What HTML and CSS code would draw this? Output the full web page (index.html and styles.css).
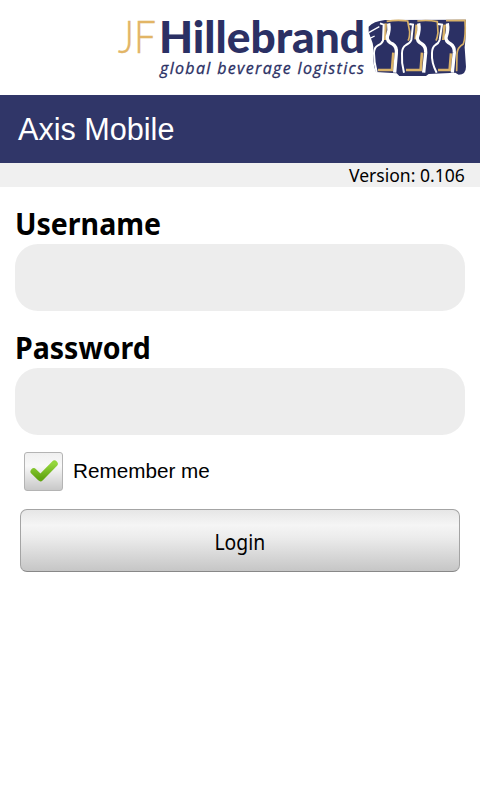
FILE: index.html
```html
<!DOCTYPE html>
<html lang="en">
<head>
    <meta charset="UTF-8">
    <meta name="viewport" content="width=device-width, initial-scale=1.0">
    <title>Axis Mobile</title>
    <link rel="stylesheet" href="styles.css">
</head>
<body>
    <div class="logo">
        <svg width="370" height="85" viewBox="110 5 370 85" role="img" aria-label="JF Hillebrand">
            <text class="logo-jf" x="118" y="53" textLength="38" lengthAdjust="spacingAndGlyphs">JF</text>
            <text class="logo-name" x="159" y="53" textLength="206" lengthAdjust="spacingAndGlyphs">Hillebrand</text>
            <text class="logo-tag" x="160" y="74" textLength="204">global beverage logistics</text>
            <g transform="translate(360 10) scale(.3333)">
                <path class="navy" d="M26 50 Q40 34 75 30 L318 29 Q318 80 314 112 L318 170 Q318 194 296 194 L286 188 L206 192 L198 198 L118 198 L110 190 L48 186 Q36 160 40 110 L38 100 L26 66 Z"/>
                <path class="gold-line" d="M80 34 Q112 29 143 33 L149 65 Q149 84 144 92 M172 33 Q204 29 232 35 L234 68 Q232 84 228 92 M258 32 L315 31 Q318 80 310 102 Q292 112 291 132 L290 184"/>
                <path class="gold-line wide" d="M77 40 L74 90 M100 128 L96 180 L54 180 M170 44 L167 88 M186 128 L182 180 L138 180 M254 44 L250 90 M273 130 L269 180 L234 180"/>
                <path class="white-line" d="M86 40 Q90 60 82 80 Q80 94 98 102 Q111 110 109 130 L104 188"/>
                <path class="white-line thin" d="M60 40 L71 44 L69 92 Q66 101 54 106 Q42 112 42 130 Q42 158 50 186"/>
                <path class="white-line" d="M176 40 Q180 60 172 82 Q170 94 186 102 Q198 110 197 128 L191 188"/>
                <path class="white-line thin" d="M148 42 L159 44 L154 90 Q150 100 138 105 Q126 112 126 130 Q124 158 132 188"/>
                <path class="white-line" d="M262 40 Q266 60 258 82 Q256 94 272 102 Q284 110 283 128 L277 188"/>
                <path class="white-line thin" d="M234 42 L246 44 L239 90 Q236 100 226 105 Q216 112 216 130 Q214 158 230 188"/>
                <path class="white-line slim" d="M26 68 L58 50 M28 86 L44 78"/>
            </g>
        </svg>
    </div>
    <div class="header">
        <h1>Axis Mobile</h1>
    </div>
    <div class="version"><span>Version: 0.106</span></div>
    <form class="login">
        <label for="username"><span>Username</span></label>
        <input type="text" id="username" class="field">
        <label for="password"><span>Password</span></label>
        <input type="password" id="password" class="field">
        <div class="remember">
            <span class="checkbox">
                <svg width="28" height="24" viewBox="0 0 28 24">
                    <defs>
                        <linearGradient id="green" x1="0" y1="0" x2="0" y2="1">
                            <stop offset="0" stop-color="#94d63c"/>
                            <stop offset="1" stop-color="#62a512"/>
                        </linearGradient>
                    </defs>
                    <path d="M3.8 11.5 L10.5 18 L24.5 3.7" fill="none" stroke="url(#green)" stroke-width="6.5" stroke-linecap="round" stroke-linejoin="round"/>
                </svg>
            </span>
            <span class="remember-text">Remember me</span>
        </div>
        <button type="button" class="submit"><span>Login</span></button>
    </form>
</body>
</html>
```

FILE: styles.css
```css
body {
    margin: 0;
    background-color: #fff;
    color: #000;
    font-family: "Noto Sans", sans-serif;
}
.logo {
    display: flex;
    justify-content: flex-end;
    height: 90px;
    padding-top: 5px;
}
.logo-jf {
    font: 300 45px Lato, sans-serif;
    fill: #e2b566;
    stroke: #e2b566;
    stroke-width: .5;
}
.logo-name {
    font: 900 44px Lato, sans-serif;
    fill: #2b3064;
}
.logo-tag {
    font: italic 400 16px "Open Sans", sans-serif;
    fill: #2b3064;
    stroke: #2b3064;
    stroke-width: .3;
}
.navy {
    fill: #2b3064;
}
.white-line {
    fill: none;
    stroke: #fff;
    stroke-width: 10;
}
.thin {
    stroke-width: 6;
}
.slim {
    stroke-width: 4;
}
.gold-line {
    fill: none;
    stroke: #d9b268;
    stroke-width: 5;
}
.wide {
    stroke-width: 8;
}
.header {
    display: flex;
    align-items: center;
    height: 68px;
    padding-left: 18px;
    background-color: #303668;
}
h1 {
    margin: 0 0 1px;
    color: #fff;
    font: 400 30.6px/36px "Liberation Sans", sans-serif;
}
.version {
    height: 24px;
    padding-right: 15px;
    background-color: #f0f0f0;
    font-size: 18px;
    line-height: 25px;
    text-align: right;
}
.version span {
    display: inline-block;
    transform: scaleX(.975);
    transform-origin: right;
}
.login {
    display: flex;
    flex-direction: column;
    padding: 15px 15px 0;
}
label {
    height: 42px;
    font-size: 30px;
    font-weight: 700;
    line-height: 44px;
}
label span {
    display: inline-block;
    transform: scaleX(.95);
    transform-origin: left;
}
.field {
    box-sizing: border-box;
    height: 67px;
    margin: 0 0 15px;
    padding: 0 20px;
    border: none;
    border-radius: 23px;
    background-color: #ededed;
    font-size: 24px;
}
.remember {
    display: flex;
    align-items: center;
    gap: 10px;
    margin: 2px 0 0 9px;
    font: 20.7px "Liberation Sans", sans-serif;
}
.remember-text {
    margin-bottom: 2px;
}
.checkbox {
    display: flex;
    align-items: center;
    justify-content: center;
    box-sizing: border-box;
    width: 39px;
    height: 39px;
    border: 1px solid #b4b4b4;
    border-radius: 3px;
    background: linear-gradient(#f0f0f0, #f8f8f8 35%, #c8c8c8);
}
.submit {
    height: 63px;
    margin: 18px 5px 0;
    padding: 0;
    border: 1px solid #a4a4a4;
    border-bottom-color: #888;
    border-radius: 7px;
    background: linear-gradient(#e6e6e6, #f5f5f5 25%, #ececec 45%, #c6c6c6);
    color: #000;
    font: 22px "Noto Sans", sans-serif;
}
.submit span {
    display: inline-block;
    transform: scaleX(.88);
}
```
